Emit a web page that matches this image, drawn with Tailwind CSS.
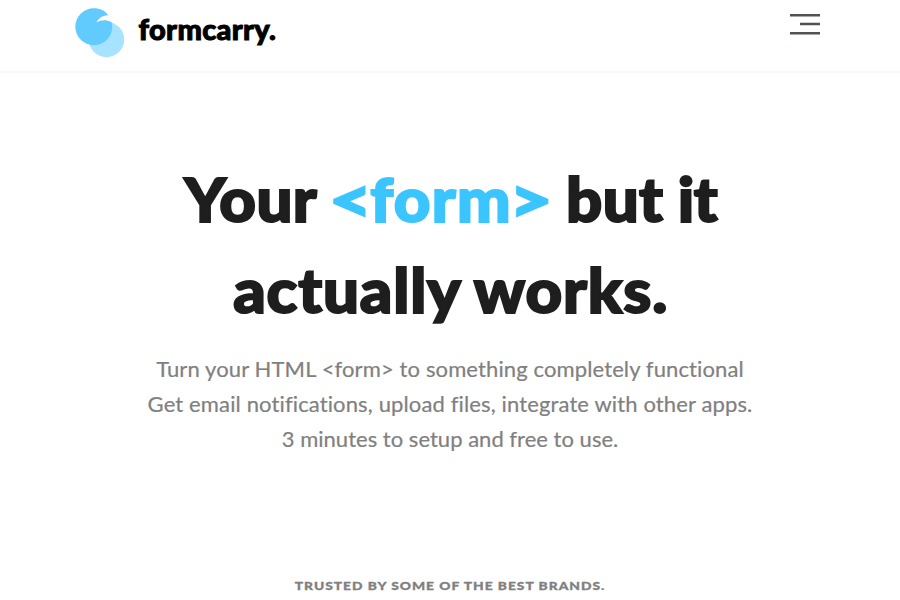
<!DOCTYPE html>
<html lang="en"><head><meta charset="utf-8"><title>formcarry</title>
<script src="https://cdn.jsdelivr.net/npm/@tailwindcss/browser@4"></script></head>
<body class="bg-white font-['Lato',sans-serif] overflow-hidden">
<header class="flex h-[73px] items-start justify-between border-b-2 border-[#f9f9f9] pl-[75px] pr-20">
<a class="flex">
<svg class="mt-2 h-[50px] w-[50px]" viewBox="0 0 50 50"><circle cx="31.500" cy="31.500" r="17.700" fill="#a5e3ff"/><path d="M33.300 7.300C30 2.700 25 0.200 18.700 0.200A18.500 18.500 0 1 0 37.300 18.700C37.300 16.800 37 15.600 36.600 14.200C31 11.300 26 11.800 21.500 14.500C23.300 10.300 27.500 7.500 33.300 7.300Z" fill="#61cbfe"/></svg>
<span class="ml-[13.500px] mt-[9px] whitespace-nowrap text-[29px] leading-10 font-black tracking-[0.35px] text-black [-webkit-text-stroke:1px_#000]">formcarry.</span></a>
<svg class="mt-[13px] h-6 w-[30px]" viewBox="0 0 30 24" fill="none" stroke="#555151" stroke-width="2.4"><path d="M0 2.200H30M10 11H30M0 20.200H30"/></svg>
</header>
<main class="flex flex-col items-center text-center">
<h1 class="mt-[80px] scale-x-[1.05] whitespace-nowrap text-[60.500px] leading-[91px] font-black text-[#1e1e1e] [-webkit-text-stroke:2px_currentColor]"><span class="ml-[2px] tracking-[0.4px]">Your <span class="text-[#3bc5ff]"><span class="inline-block w-[37px] origin-center scale-x-[1.17]">&lt;</span><span class="tracking-[1.2px]">form</span><span class="inline-block w-[37px] origin-center scale-x-[1.17]">&gt;</span></span> <span class="tracking-[0.300px]">but</span> <span class="-ml-px tracking-[-0.600px]">it</span></span><br><span class="ml-[2px] tracking-[0.8px] [word-spacing:-1px]">actually works.</span></h1>
<p class="mt-[16px] whitespace-nowrap text-[22px] leading-[35px] text-[#808080] [-webkit-text-stroke:0.2px_#808080]"><span class="tracking-[0.120px]">Turn your HTML &lt;form&gt; to something completely functional</span><br><span class="tracking-[0.130px]">Get email notifications, upload files, integrate with other apps.</span><br><span class="tracking-[0.020px]">3 minutes to setup and free to use.</span></p>
<p class="mt-[120px] scale-x-[1.15] whitespace-nowrap text-[12px] leading-5 font-black tracking-[0.85px] text-[#808080] [-webkit-text-stroke:0.3px_#808080]">TRUSTED BY SOME OF THE BEST BRANDS.</p>
</main>
</body></html>
